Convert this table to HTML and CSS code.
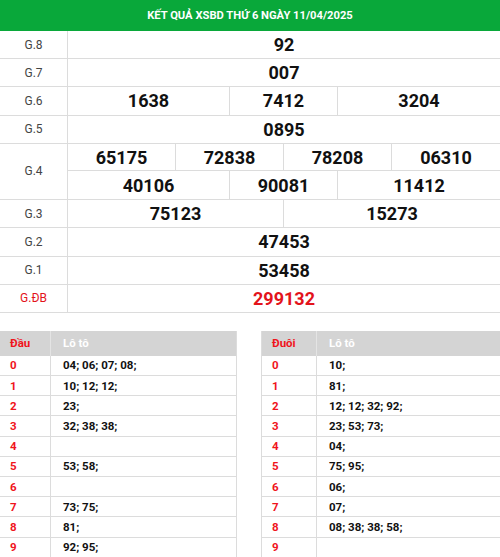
FILE: index.html
```html
<!DOCTYPE html>
<html lang="vi">
<head>
<meta charset="utf-8">
<link rel="stylesheet" href="styles.css">
</head>
<body>
<div class="kq">
  <div class="title">KẾT QUẢ XSBD THỨ 6 NGÀY 11/04/2025</div>
  <div class="row"><div class="lbl">G.8</div><div class="nums"><div class="n s8">92</div></div></div>
  <div class="row"><div class="lbl">G.7</div><div class="nums"><div class="n s8">007</div></div></div>
  <div class="row"><div class="lbl">G.6</div><div class="nums"><div class="n s3">1638</div><div class="n s2">7412</div><div class="n s3">3204</div></div></div>
  <div class="row"><div class="lbl">G.5</div><div class="nums"><div class="n s8">0895</div></div></div>
  <div class="row double"><div class="lbl">G.4</div>
    <div class="nums two">
      <div class="n s2">65175</div><div class="n s2">72838</div><div class="n s2">78208</div><div class="n s2">06310</div>
      <div class="n s3">40106</div><div class="n s2">90081</div><div class="n s3">11412</div>
    </div>
  </div>
  <div class="row"><div class="lbl">G.3</div><div class="nums"><div class="n s4">75123</div><div class="n s4">15273</div></div></div>
  <div class="row"><div class="lbl">G.2</div><div class="nums"><div class="n s8">47453</div></div></div>
  <div class="row"><div class="lbl">G.1</div><div class="nums"><div class="n s8">53458</div></div></div>
  <div class="row"><div class="lbl red">G.ĐB</div><div class="nums"><div class="n s8 red">299132</div></div></div>
</div>

<div class="loto">
  <div class="lt">
    <div class="lr head"><div class="c1">Đầu</div><div class="c2">Lô tô</div></div>
    <div class="lr"><div class="c1">0</div><div class="c2">04; 06; 07; 08;</div></div>
    <div class="lr"><div class="c1">1</div><div class="c2">10; 12; 12;</div></div>
    <div class="lr"><div class="c1">2</div><div class="c2">23;</div></div>
    <div class="lr"><div class="c1">3</div><div class="c2">32; 38; 38;</div></div>
    <div class="lr"><div class="c1">4</div><div class="c2"></div></div>
    <div class="lr"><div class="c1">5</div><div class="c2">53; 58;</div></div>
    <div class="lr"><div class="c1">6</div><div class="c2"></div></div>
    <div class="lr"><div class="c1">7</div><div class="c2">73; 75;</div></div>
    <div class="lr"><div class="c1">8</div><div class="c2">81;</div></div>
    <div class="lr"><div class="c1">9</div><div class="c2">92; 95;</div></div>
  </div>
  <div class="lt right">
    <div class="lr head"><div class="c1">Đuôi</div><div class="c2">Lô tô</div></div>
    <div class="lr"><div class="c1">0</div><div class="c2">10;</div></div>
    <div class="lr"><div class="c1">1</div><div class="c2">81;</div></div>
    <div class="lr"><div class="c1">2</div><div class="c2">12; 12; 32; 92;</div></div>
    <div class="lr"><div class="c1">3</div><div class="c2">23; 53; 73;</div></div>
    <div class="lr"><div class="c1">4</div><div class="c2">04;</div></div>
    <div class="lr"><div class="c1">5</div><div class="c2">75; 95;</div></div>
    <div class="lr"><div class="c1">6</div><div class="c2">06;</div></div>
    <div class="lr"><div class="c1">7</div><div class="c2">07;</div></div>
    <div class="lr"><div class="c1">8</div><div class="c2">08; 38; 38; 58;</div></div>
    <div class="lr"><div class="c1">9</div><div class="c2"></div></div>
  </div>
</div>
</body>
</html>
```

FILE: styles.css
```css
* { box-sizing: border-box; }
html, body { margin: 0; padding: 0; background: #fff; }
body { font-family: Roboto, "Liberation Sans", Arial, sans-serif; color: #111; width: 500px; height: 557px; overflow: hidden; }

.title {
  height: 31px;
  background: #09a83a;
  color: #fff;
  font-weight: 700;
  font-size: 11.2px;
  display: flex;
  align-items: center;
  justify-content: center;
}

.row {
  display: flex;
  height: 28.2px;
  border-bottom: 1px solid #dcdcdc;
}
.row.double { height: 56.4px; }

.lbl {
  width: 68px;
  flex: none;
  border-right: 1px solid #dcdcdc;
  display: flex;
  align-items: center;
  justify-content: center;
  font-size: 12px;
  color: #444;
}
.nums {
  flex: 1;
  display: grid;
  grid-template-columns: repeat(8, 1fr);
  grid-auto-rows: 1fr;
}
.nums.two { grid-template-rows: 1fr 1fr; }
.nums.two .n:nth-child(-n+4) { border-bottom: 1px solid #dcdcdc; }

.n {
  display: flex;
  align-items: center;
  justify-content: center;
  font-size: 18px;
  font-weight: 700;
  color: #111;
  border-right: 1px solid #dcdcdc;
}
.n:last-child { border-right: none; }
.nums.two .n:nth-child(4) { border-right: none; }
.s2 { grid-column: span 2; }
.s3 { grid-column: span 3; }
.s4 { grid-column: span 4; }
.s8 { grid-column: span 8; }
.red { color: #e3131b; }
.n.red { color: #e3131b; }

.loto {
  display: flex;
  justify-content: space-between;
  margin-top: 18px;
}
.lt {
  width: 237px;
  border-right: 1px solid #dcdcdc;
}
.lt.right {
  width: 239px;
  border-right: none;
  border-left: 1px solid #dcdcdc;
}
.lr {
  display: flex;
  height: 20.2px;
  border-bottom: 1px solid #dcdcdc;
  font-size: 11.5px;
  font-weight: 700;
}
.lr .c1 {
  width: 51px;
  flex: none;
  padding-left: 10px;
  color: #f0141c;
  border-right: 1px solid #dcdcdc;
  display: flex;
  align-items: center;
}
.lt.right .lr .c1 { width: 55px; padding-left: 10px; }
.lr .c2 {
  flex: 1;
  padding-left: 12px;
  color: #111;
  display: flex;
  align-items: center;
}
.lr.head {
  height: 25px;
  background: #d4d4d4;
  border-bottom: none;
}
.lr.head .c1 { border-right: 1px solid #e4e4e4; }
.lr.head .c2 { color: #fff; }
```
